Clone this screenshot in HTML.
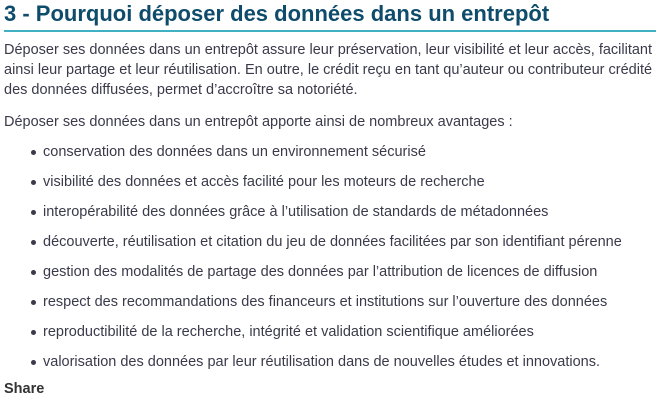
<!DOCTYPE html>
<html><head><meta charset="utf-8"><style>
body{margin:0;background:#fff;font-family:"Liberation Sans",sans-serif;color:#3a3a4a;}
h2{position:absolute;left:4px;top:1px;margin:0;font-size:22px;font-weight:bold;color:#0f4c6c;white-space:nowrap;}
.rule{position:absolute;left:4px;top:30px;width:652px;height:2px;background:#3fb1c2;}
p{position:absolute;left:4px;margin:0;font-size:14.5px;line-height:20px;width:652px;}
ul{position:absolute;left:0;top:142px;margin:0;padding:0;list-style:none;font-size:14.5px;}
li{height:30px;line-height:20px;padding-left:43px;position:relative;white-space:nowrap;}
li:before{content:"";position:absolute;left:31px;top:8px;width:5px;height:5px;border-radius:50%;background:#3a3a4a;}
.share{position:absolute;left:4px;top:381px;font-weight:bold;font-size:14.5px;color:#333;}
</style></head><body>
<h2>3 - Pourquoi déposer des données dans un entrepôt</h2>
<div class="rule"></div>
<p style="top:40px">Déposer ses données dans un entrepôt assure leur préservation, leur visibilité et leur accès, facilitant ainsi leur partage et leur réutilisation. En outre, le crédit reçu en tant qu’auteur ou contributeur crédité des données diffusées, permet d’accroître sa notoriété.</p>
<p style="top:112px">Déposer ses données dans un entrepôt apporte ainsi de nombreux avantages :</p>
<ul>
<li>conservation des données dans un environnement sécurisé</li>
<li>visibilité des données et accès facilité pour les moteurs de recherche</li>
<li>interopérabilité des données grâce à l’utilisation de standards de métadonnées</li>
<li>découverte, réutilisation et citation du jeu de données facilitées par son identifiant pérenne</li>
<li>gestion des modalités de partage des données par l’attribution de licences de diffusion</li>
<li>respect des recommandations des financeurs et institutions sur l’ouverture des données</li>
<li>reproductibilité de la recherche, intégrité et validation scientifique améliorées</li>
<li>valorisation des données par leur réutilisation dans de nouvelles études et innovations.</li>
</ul>
<div class="share">Share</div>
</body></html>
